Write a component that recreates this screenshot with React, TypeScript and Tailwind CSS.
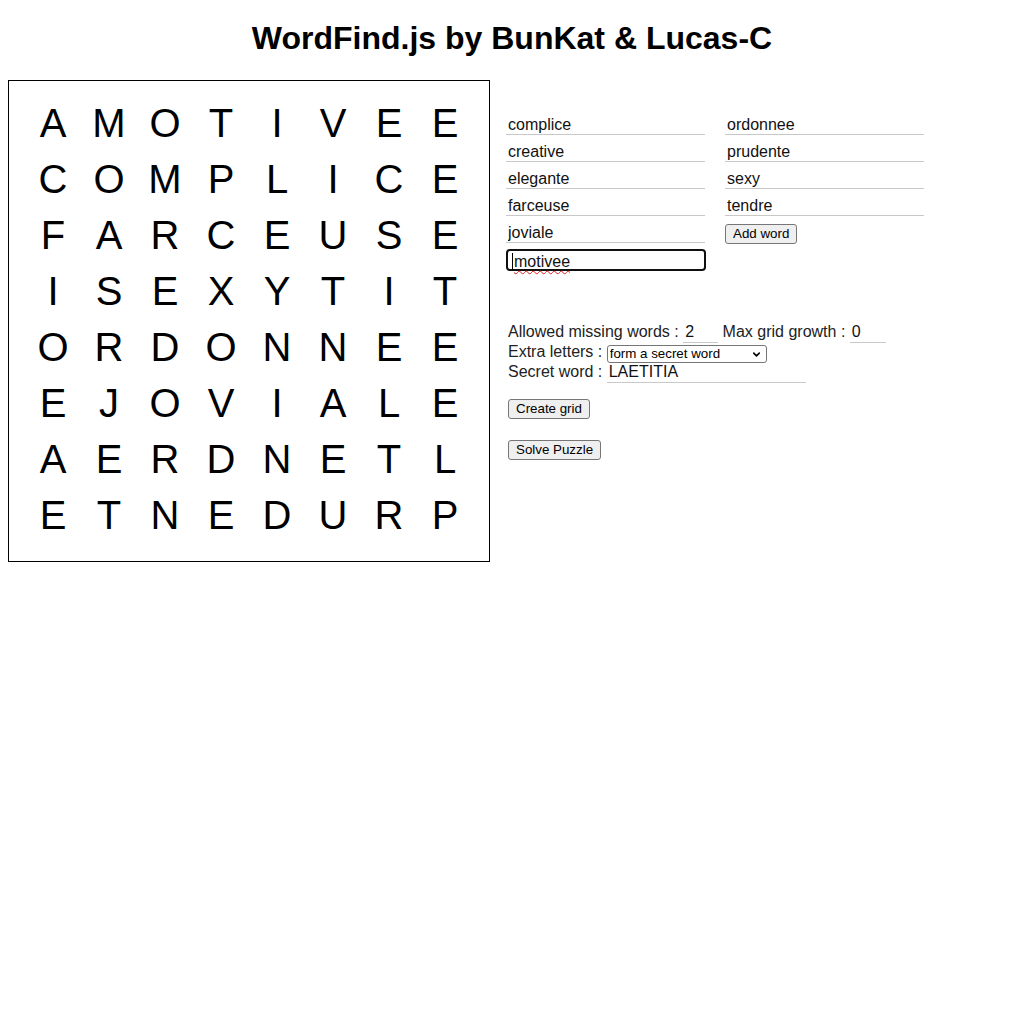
import { ChevronDown } from 'lucide-react';

const grid = [
  'AMOTIVEE',
  'COMPLICE',
  'FARCEUSE',
  'ISEXYTIT',
  'ORDONNEE',
  'EJOVIALE',
  'AERDNETL',
  'ETNEDURP',
];

const leftWords = ['complice', 'creative', 'elegante', 'farceuse', 'joviale'];
const rightWords = ['ordonnee', 'prudente', 'sexy', 'tendre'];

function WordInput({ value }: { value: string }) {
  return (
    <input
      readOnly
      value={value}
      className="block w-[199px] h-[27px] pt-[8px] pl-[2px] border-b border-[#c8c8c8] text-[16px] text-[#111] outline-none"
    />
  );
}

function Btn({ children }: { children: React.ReactNode }) {
  return (
    <button className="h-[20px] px-[7px] border border-[#767676] rounded-[3px] bg-[#efefef] text-[13.33px] leading-[16px] text-black">
      {children}
    </button>
  );
}

export default function App() {
  return (
    <div className="min-h-screen bg-white font-['Liberation_Sans',Arial,sans-serif] text-black">
      <h1 className="pt-[20px] mb-[23px] text-center text-[32px] leading-[37px] font-bold">
        WordFind.js by BunKat &amp; Lucas-C
      </h1>

      <div className="flex items-start pl-2">
        {/* puzzle */}
        <div className="box-border w-[482px] h-[482px] border border-black pt-[14px] pl-[16px]">
          <div className="grid grid-cols-[repeat(8,56px)]">
            {grid.map((row, r) =>
              row.split('').map((ch, c) => (
                <div key={`${r}-${c}`} className="h-[56px] text-center text-[40px] leading-[56px]">
                  {ch}
                </div>
              ))
            )}
          </div>
        </div>

        {/* controls */}
        <div className="ml-[16px] pt-[28px] text-[#222]">
          <div className="flex gap-[19px]">
            <div className="flex flex-col">
              {leftWords.map((w) => (
                <WordInput key={w} value={w} />
              ))}
              <div className="relative box-border mt-[6px] w-[200px] h-[22px] border-2 border-[#101010] rounded-[4px] pl-[6px]">
                <div className="text-[16px] leading-[21px] text-[#111]">
                  <span className="underline decoration-wavy decoration-[#e02020] decoration-[1px] underline-offset-[3px]">
                    motivee
                  </span>
                </div>
                <span className="absolute left-[4px] top-[2px] w-px h-[17px] bg-black" />
              </div>
            </div>
            <div className="flex flex-col">
              {rightWords.map((w) => (
                <WordInput key={w} value={w} />
              ))}
              <div className="flex mt-[8px]">
                <Btn>Add word</Btn>
              </div>
            </div>
          </div>

          <div className="ml-[2px] mt-[51px] text-[16px]">
            <div className="flex items-start h-[20px]">
              <span className="whitespace-pre leading-[20px]">Allowed missing words : </span>
              <input
                readOnly
                value="2"
                className="w-[35px] h-[21px] pl-[2px] border-b border-[#c8c8c8] text-[16px] text-[#111] outline-none"
              />
              <span className="whitespace-pre leading-[20px]"> Max grid growth : </span>
              <input
                readOnly
                value="0"
                className="w-[36px] h-[21px] pl-[2px] border-b border-[#c8c8c8] text-[16px] text-[#111] outline-none"
              />
            </div>
            <div className="flex items-start h-[20px]">
              <span className="whitespace-pre leading-[20px]">Extra letters : </span>
              <div className="relative flex mt-[3px]">
                <select
                  defaultValue="secret"
                  className="block appearance-none box-border w-[160px] h-[18px] pl-[2px] border border-[#767676] rounded-[3px] bg-white text-[13.33px] leading-[16px] text-black outline-none"
                >
                  <option value="none">none</option>
                  <option value="random">random letters</option>
                  <option value="secret">form a secret word</option>
                </select>
                <ChevronDown
                  className="pointer-events-none absolute right-[5px] top-[4px] w-[11px] h-[11px] text-black"
                  strokeWidth={3.5}
                />
              </div>
            </div>
            <div className="flex items-start h-[20px]">
              <span className="whitespace-pre leading-[20px]">Secret word : </span>
              <input
                readOnly
                value="LAETITIA"
                className="w-[199px] h-[21px] pl-[2px] border-b border-[#c8c8c8] text-[16px] text-[#111] outline-none"
              />
            </div>

            <div className="flex mt-[17px]">
              <Btn>Create grid</Btn>
            </div>
            <div className="flex mt-[21px]">
              <Btn>Solve Puzzle</Btn>
            </div>
          </div>
        </div>
      </div>
    </div>
  );
}
